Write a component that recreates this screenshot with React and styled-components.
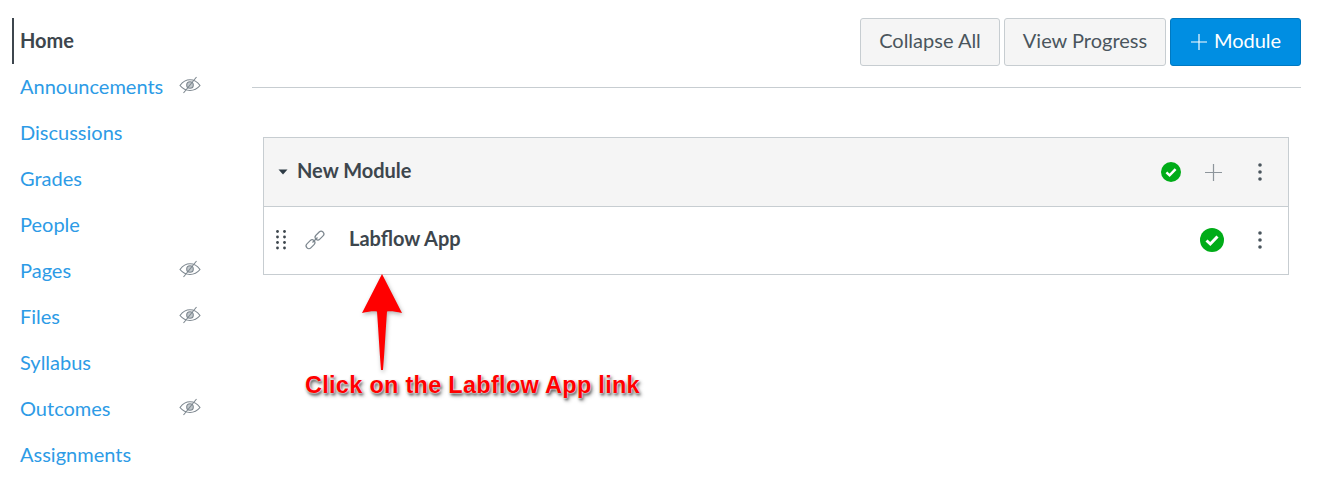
import React from 'react';
import styled, { createGlobalStyle } from 'styled-components';

const GlobalStyle = createGlobalStyle`
  html, body {
    margin: 0;
    padding: 0;
    background: #fff;
    font-family: Lato, "Liberation Sans", sans-serif;
  }
`;

const Page = styled.div`
  position: relative;
  width: 1343px;
  height: 481px;
  overflow: hidden;
  display: flex;
  box-sizing: border-box;
  padding: 18px 42px 0 12px;
`;

const Sidebar = styled.nav`
  width: 240px;
  flex: none;
  display: flex;
  flex-direction: column;
`;

const NavItem = styled.a`
  height: 46px;
  box-sizing: border-box;
  width: 189px;
  display: flex;
  align-items: center;
  justify-content: space-between;
  padding-left: ${({ $active }) => ($active ? '6px' : '8px')};
  padding-bottom: 2px;
  border-left: ${({ $active }) => ($active ? '2px solid #3d464d' : 'none')};
  font-size: 20px;
  font-weight: ${({ $active }) => ($active ? 700 : 400)};
  color: ${({ $active }) => ($active ? '#3d464d' : '#2d9be6')};
`;

const EyeSvg = styled.svg`
  margin-bottom: 2px;
`;

const Main = styled.main`
  flex: 1;
  min-width: 0;
`;

const Toolbar = styled.div`
  display: flex;
  justify-content: flex-end;
  gap: 4px;
  padding-bottom: 21px;
  border-bottom: 1px solid #c7cdd1;
`;

const Button = styled.button`
  height: 48px;
  box-sizing: border-box;
  width: ${({ $width }) => $width}px;
  padding: 0 0 5px;
  display: flex;
  align-items: center;
  justify-content: center;
  gap: 7px;
  border-radius: 3px;
  font-family: inherit;
  font-size: 20px;
  background: ${({ $primary }) => ($primary ? '#008ee2' : '#f5f5f5')};
  color: ${({ $primary }) => ($primary ? '#fff' : '#4a555d')};
  border: 1px solid ${({ $primary }) => ($primary ? '#0079c1' : '#c7cdd1')};
`;

const ButtonPlus = styled.span`
  display: flex;
  margin: 5px 0 0 1px;
`;

const ModuleBox = styled.section`
  margin: 49px 12px 0 11px;
  border: 1px solid #c7cdd1;
`;

const ModuleHeader = styled.div`
  height: 69px;
  box-sizing: border-box;
  display: flex;
  align-items: center;
  padding-left: 14px;
  background: #f5f5f5;
  border-bottom: 1px solid #c7cdd1;
`;

const ModuleTitle = styled.span`
  margin-left: 9px;
  padding-bottom: 5px;
  font-size: 20px;
  font-weight: 700;
  color: #3d464d;
  flex: 1;
`;

const ItemRow = styled.div`
  height: 67px;
  box-sizing: border-box;
  display: flex;
  align-items: center;
  padding: 0 0 2px 12px;
`;

const ItemTitle = styled.span`
  margin-left: 23px;
  padding-bottom: 4px;
  font-size: 20px;
  font-weight: 700;
  color: #3d464d;
  flex: 1;
`;

const IconSlot = styled.span`
  display: flex;
  align-items: center;
  justify-content: center;
  flex: none;
  width: ${({ $width }) => $width}px;
  margin-left: ${({ $gap }) => $gap || 0}px;
`;

const ArrowOverlay = styled.svg`
  position: absolute;
  left: 358px;
  top: 272px;
  filter: drop-shadow(1px 2px 2px rgba(0, 0, 0, 0.3));
`;

const Caption = styled.div`
  position: absolute;
  left: 305px;
  top: 371px;
  font-family: "Liberation Sans", Arial, sans-serif;
  font-size: 23.5px;
  letter-spacing: 0.28px;
  line-height: 28px;
  font-weight: 700;
  white-space: nowrap;
  color: #f00;
  text-shadow: 0 0 2px #fff, 0 0 2px #fff, 1px 2px 3px rgba(0, 0, 0, 0.7), 2px 3px 4px rgba(0, 0, 0, 0.3);
`;

const EyeOff = () => (
  <EyeSvg width="22" height="18" viewBox="0 0 22 18" fill="none" stroke="#7d878f" strokeWidth="1.100">
    <path d="M1 9.500C4 5.500 7.500 3.800 11 3.800s7 1.700 10 5.700c-3 3.600-6.500 5-10 5s-7-1.400-10-5z" />
    <circle cx="11" cy="9" r="3.300" fill="#c3c9cd" />
    <path d="M17.500 1 4.500 17" />
  </EyeSvg>
);

const Caret = () => (
  <svg width="10" height="6" viewBox="0 0 10 6">
    <path d="M0.500 0.500h9L5 5.500z" fill="#2d3b45" />
  </svg>
);

const Plus = ({ size, color }) => (
  <svg width={size} height={size} viewBox="0 0 18 18" stroke={color} strokeWidth="1.300">
    <path d="M9 0v18M0 9h18" />
  </svg>
);

const Check = ({ size }) => (
  <svg width={size} height={size} viewBox="0 0 24 24">
    <circle cx="12" cy="12" r="12" fill="#00ac18" />
    <path d="M6.500 12.500l3.800 3.500 7.200-7.500" fill="none" stroke="#fff" strokeWidth="3" />
  </svg>
);

const Kebab = () => (
  <svg width="4" height="18" viewBox="0 0 4 18" fill="#4a555d">
    <circle cx="2" cy="2" r="1.800" />
    <circle cx="2" cy="9" r="1.800" />
    <circle cx="2" cy="16" r="1.800" />
  </svg>
);

const DragHandle = () => (
  <svg width="10" height="20" viewBox="0 0 10 20" fill="#3d464d">
    {[1.5, 7, 12.5, 18].map((y) => (
      <React.Fragment key={y}>
        <circle cx="1.500" cy={y} r="1.400" />
        <circle cx="8.500" cy={y} r="1.400" />
      </React.Fragment>
    ))}
  </svg>
);

const LinkIcon = () => (
  <svg width="24" height="24" viewBox="0 0 22 22" fill="none" stroke="#7d878f" strokeWidth="1.200">
    <rect x="1.500" y="12.500" width="10" height="5.500" rx="2.700" transform="rotate(-45 6.500 15.250)" />
    <rect x="10.500" y="3.800" width="10" height="5.500" rx="2.700" transform="rotate(-45 15.500 6.550)" />
    <path d="M8.500 13.500l5-5" />
  </svg>
);

const navItems = [
  { label: 'Home', active: true },
  { label: 'Announcements', hidden: true },
  { label: 'Discussions' },
  { label: 'Grades' },
  { label: 'People' },
  { label: 'Pages', hidden: true },
  { label: 'Files', hidden: true },
  { label: 'Syllabus' },
  { label: 'Outcomes', hidden: true },
  { label: 'Assignments' },
];

export default function App() {
  return (
    <Page>
      <GlobalStyle />
      <Sidebar>
        {navItems.map((item) => (
          <NavItem key={item.label} $active={item.active}>
            {item.label}
            {item.hidden && <EyeOff />}
          </NavItem>
        ))}
      </Sidebar>
      <Main>
        <Toolbar>
          <Button $width={140}>Collapse All</Button>
          <Button $width={162}>View Progress</Button>
          <Button $width={131} $primary>
            <ButtonPlus><Plus size={16} color="#fff" /></ButtonPlus>
            Module
          </Button>
        </Toolbar>
        <ModuleBox>
          <ModuleHeader>
            <Caret />
            <ModuleTitle>New Module</ModuleTitle>
            <IconSlot $width={20}><Check size={20} /></IconSlot>
            <IconSlot $width={18} $gap={23}><Plus size={17} color="#8d959b" /></IconSlot>
            <IconSlot $width={4} $gap={36}><Kebab /></IconSlot>
            <IconSlot $width={26} />
          </ModuleHeader>
          <ItemRow>
            <DragHandle />
            <IconSlot $width={22} $gap={18}><LinkIcon /></IconSlot>
            <ItemTitle>Labflow App</ItemTitle>
            <IconSlot $width={24}><Check size={24} /></IconSlot>
            <IconSlot $width={4} $gap={34}><Kebab /></IconSlot>
            <IconSlot $width={26} />
          </ItemRow>
        </ModuleBox>
      </Main>
      <ArrowOverlay width="48" height="102" viewBox="0 0 48 102">
        <path d="M24 2 44 41C36.500 39 31.500 39 29 39.500 27.500 60 26.500 80 25 98h-2C21.500 80 20.500 60 19 39.500 16.500 39 11.500 39 4 41z" fill="#f00" />
      </ArrowOverlay>
      <Caption>Click on the Labflow App link</Caption>
    </Page>
  );
}
